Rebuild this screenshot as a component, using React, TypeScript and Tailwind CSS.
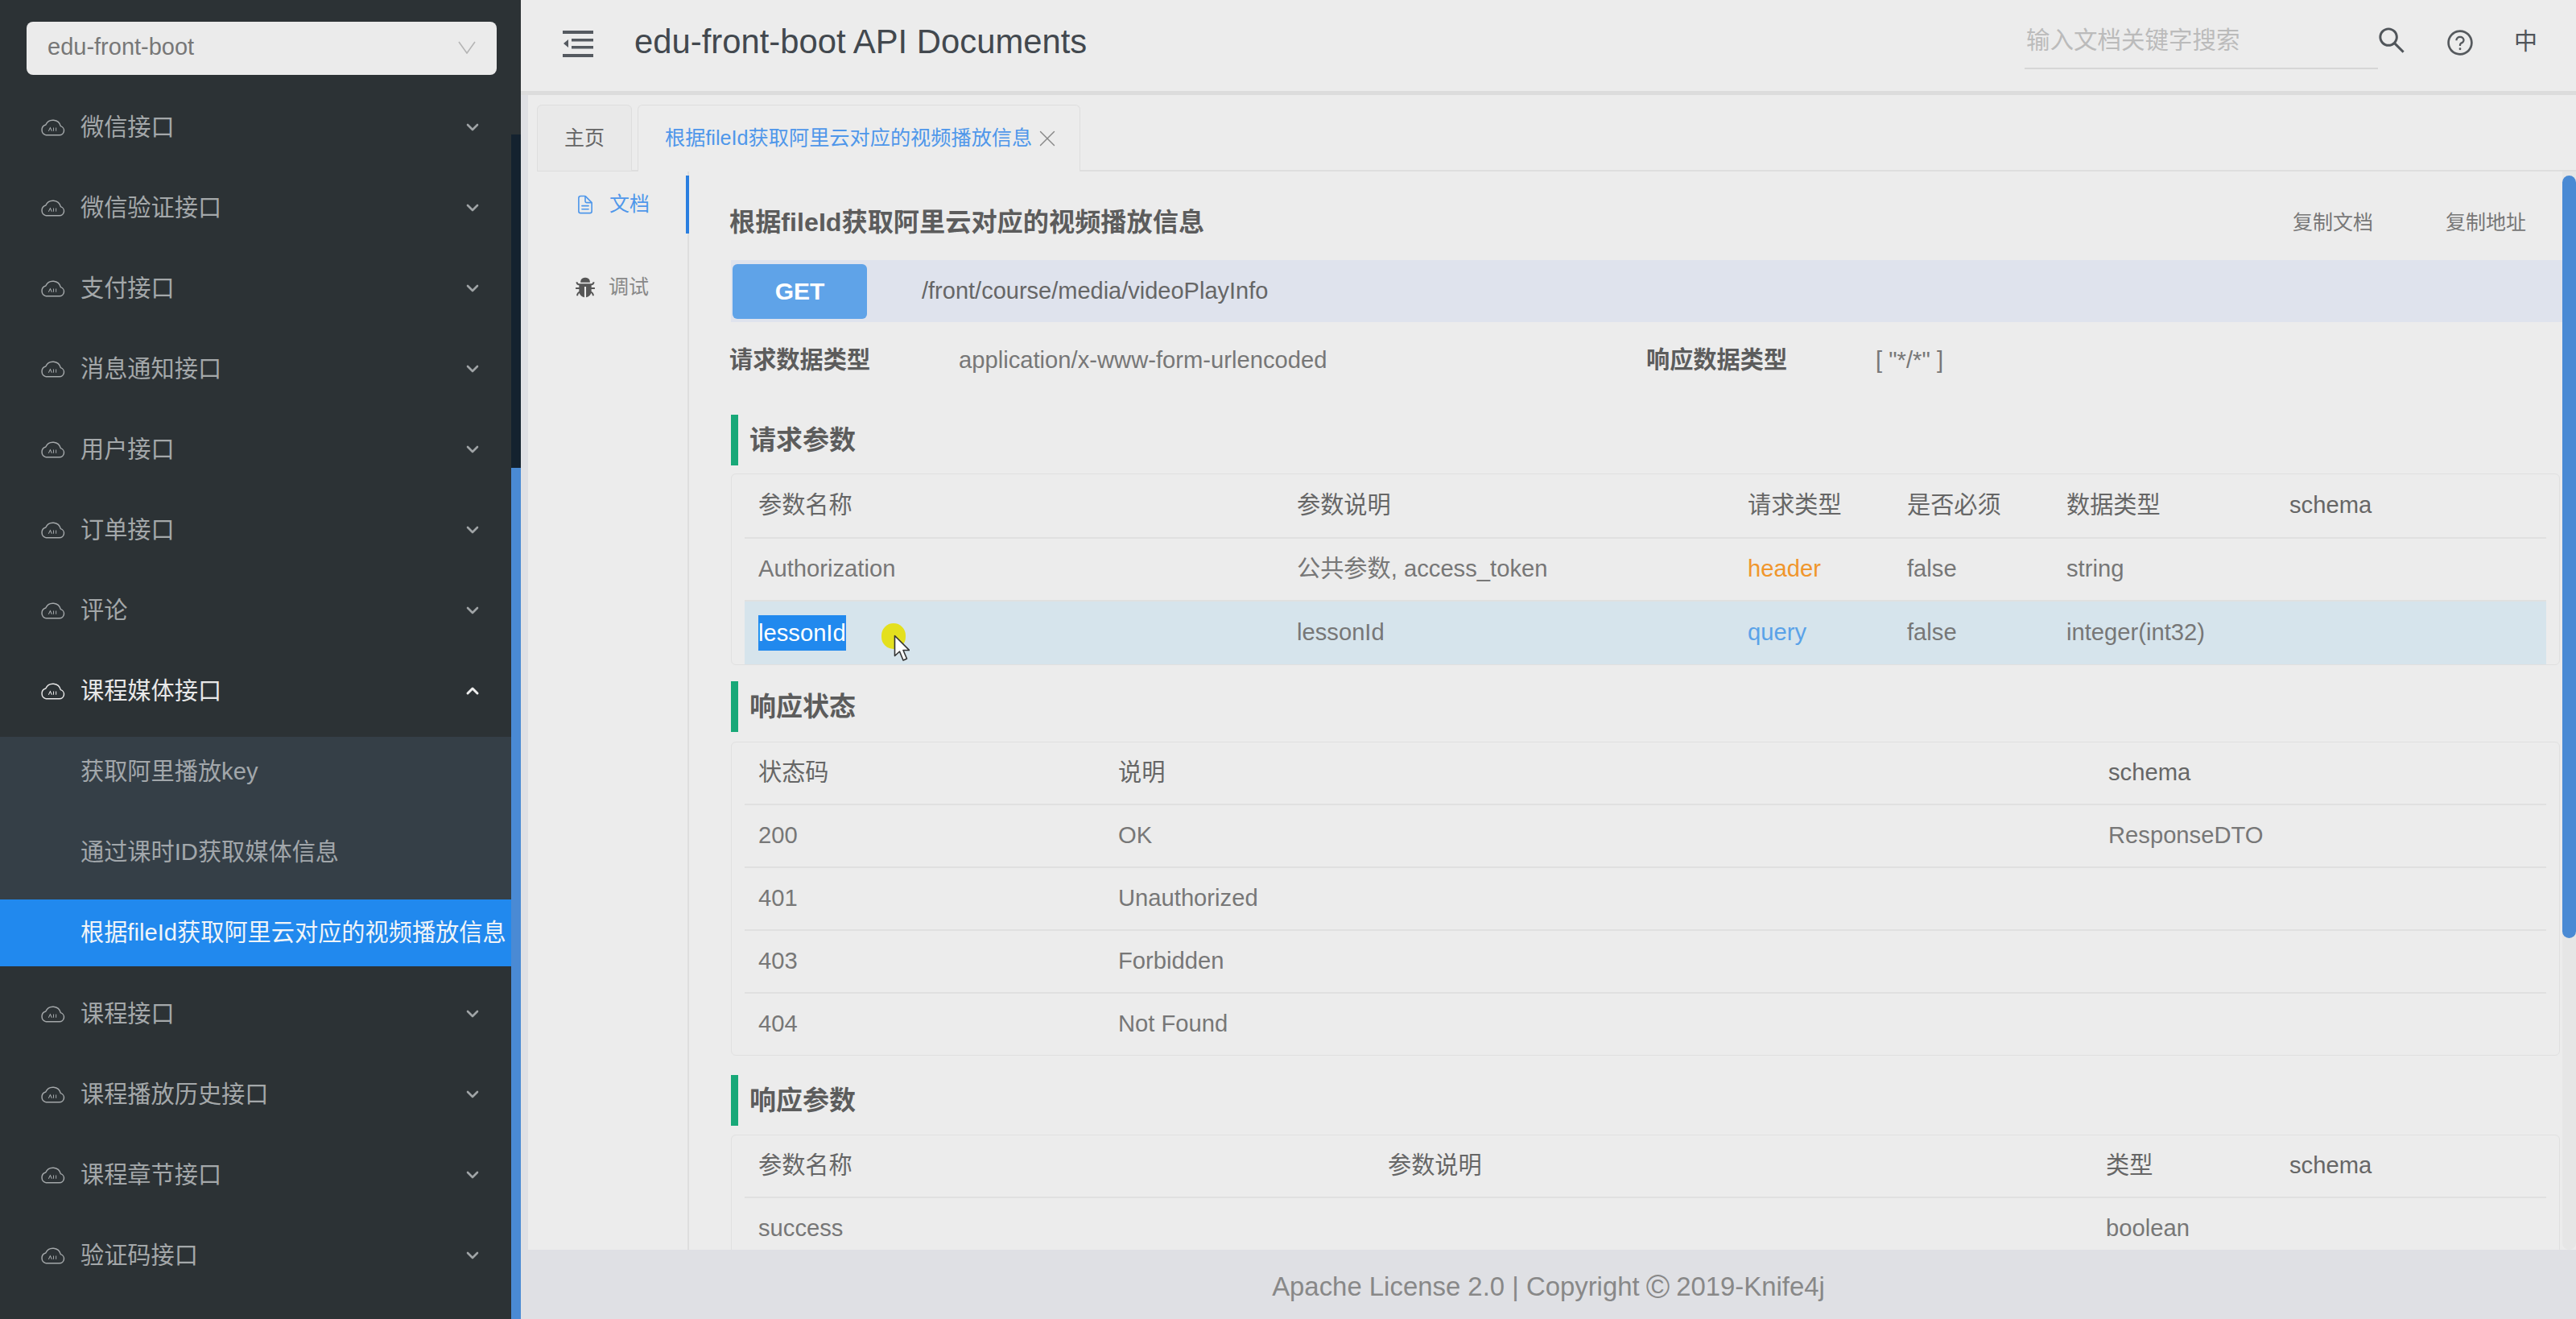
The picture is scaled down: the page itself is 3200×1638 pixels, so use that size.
import React from 'react';
import { ChevronDown, ChevronUp, X } from 'lucide-react';
import { AiFillBug, AiOutlineQuestionCircle, AiOutlineSearch } from 'react-icons/ai';
import { IoDocumentTextOutline } from 'react-icons/io5';

const CloudIcon = ({ className }: { className?: string }) => (
    <svg viewBox="0 0 30 24" fill="none" stroke="currentColor" strokeWidth="1.4" className={className}>
        <path d="M7 22h16a5.5 5.5 0 0 0 1.5-10.8A9.5 9.5 0 0 0 6.6 9.6 6.4 6.4 0 0 0 7 22z" strokeLinejoin="round" />
        <path d="M10 17l2-4 2 4M16 17v-4M19 17v-4" strokeWidth="1" />
    </svg>
);

const MenuFold = () => (
    <svg viewBox="0 0 38 34" className="w-[38px] h-[34px]" fill="#555a60">
        <rect x="0" y="1" width="38" height="4" />
        <rect x="11" y="11" width="27" height="3.5" />
        <rect x="11" y="20" width="27" height="3.5" />
        <rect x="0" y="30" width="38" height="4" />
        <path d="M7 12v10l-6-5z" />
    </svg>
);

const CursorArrow = () => (
    <svg viewBox="0 0 20 34" className="w-[20px] h-[34px]">
        <path d="M1.5 1.5v25l6-5.5 4.5 11 4.5-2-4.5-10.5h7.5z" fill="#fff" stroke="#333" strokeWidth="1.6" strokeLinejoin="round" />
    </svg>
);

const topGroups = ['微信接口', '微信验证接口', '支付接口', '消息通知接口', '用户接口', '订单接口', '评论'];
const bottomGroups = ['课程接口', '课程播放历史接口', '课程章节接口', '验证码接口'];

const NavGroup = ({ label, open }: { label: string; open?: boolean }) => (
    <div className={`h-[100px] shrink-0 flex items-center pl-[50px] pr-[36px] ${open ? 'text-[#e8e8e8]' : 'text-[#a4a8aa]'}`}>
        <CloudIcon className="w-[31px] h-[25px] mr-[19px] -mt-[3px]" />
        <span className="text-[29.2px] whitespace-nowrap">{label}</span>
        {open ? (
            <ChevronUp className="ml-auto w-[24px] h-[24px] -mt-[2px] text-[#eee]" strokeWidth={3} />
        ) : (
            <ChevronDown className="ml-auto w-[24px] h-[24px] -mt-[2px] text-[#a0a4a6]" strokeWidth={2.6} />
        )}
    </div>
);

const SubItem = ({ label, active }: { label: string; active?: boolean }) => (
    <div className={`h-[83px] flex items-center pl-[100px] text-[29.2px] whitespace-nowrap ${active ? 'bg-[#2189ee] text-[#f0f4f8]' : 'text-[#a2a7ab]'}`}>
        {label}
    </div>
);

const Sidebar = () => (
    <aside className="w-[647px] shrink-0 h-full flex bg-[#2c3235] overflow-hidden">
        <div className="w-[635px] shrink-0 flex flex-col">
            <div className="mx-[33px] mt-[27px] mb-[16px] h-[66px] shrink-0 w-[584px] rounded-lg bg-[#ebebeb] flex items-center pl-[26px] pr-[26px] pb-[3px] text-[#777] text-[29px]">
                <span>edu-front-boot</span>
                <svg viewBox="0 0 22 16" className="ml-auto w-[22px] h-[16px]" fill="none" stroke="#b5b5b5" strokeWidth="1.6">
                    <path d="M1 1l10 14L21 1" />
                </svg>
            </div>
            {topGroups.map(g => <NavGroup key={g} label={g} />)}
            <NavGroup label="课程媒体接口" open />
            <div className="mt-[6px] mb-[10px] pt-[2px] bg-[#353f47] flex flex-col gap-[17px] shrink-0">
                <SubItem label="获取阿里播放key" />
                <SubItem label="通过课时ID获取媒体信息" />
                <SubItem label="根据fileId获取阿里云对应的视频播放信息" active />
            </div>
            {bottomGroups.map(g => <NavGroup key={g} label={g} />)}
        </div>
        <div className="w-[12px] shrink-0 flex flex-col">
            <div className="h-[167px]" />
            <div className="h-[414px] bg-[#14222f]" />
            <div className="flex-1 bg-[#4a8ad4]" />
        </div>
    </aside>
);

const Header = () => (
    <header className="h-[118px] shrink-0 bg-[#ececec] border-b-[5px] border-[#dcdcdc] flex items-center pl-[52px] pb-[6px]">
        <MenuFold />
        <h1 className="ml-[51px] text-[41.8px] text-[#42484e] -mt-[3px]">edu-front-boot API Documents</h1>
        <div className="ml-auto w-[439px] h-[70px] border-b-2 border-[#d6d6d6] flex items-center text-[29.5px] text-[#bbb] -mt-[5px] pt-[1px] pl-[2px]">
            输入文档关键字搜索
        </div>
        <AiOutlineSearch className="-ml-[3px] w-[40px] h-[40px] text-[#50555a] -mt-[8px]" />
        <AiOutlineQuestionCircle className="ml-[47px] w-[36px] h-[36px] text-[#55595d] -mt-[2px]" />
        <span className="ml-[49px] mr-[48px] text-[29px] text-[#50555a] -mt-[2px]">中</span>
    </header>
);

const Tabs = () => (
    <div className="h-[95px] shrink-0 pt-[12px] pl-[11px] flex">
        <div className="flex w-full border-b-2 border-[#dedede] gap-[7px] h-[83px]">
            <div className="w-[118px] h-[83px] rounded-t-md border border-[#dedede] bg-[#e9e9e9] flex items-center justify-center text-[25px] text-[#666]">
                主页
            </div>
            <div className="w-[550px] h-[83px] rounded-t-md border border-b-0 border-[#dedede] bg-[#ececec] flex items-center pl-[33px] text-[25.2px] text-[#4f97ea]">
                <span className="whitespace-nowrap">根据fileId获取阿里云对应的视频播放信息</span>
                <X className="ml-[2px] w-[34px] h-[34px] text-[#888]" strokeWidth={1} />
            </div>
        </div>
    </div>
);

const SideTabs = () => (
    <div className="w-[200px] shrink-0 border-r-2 border-[#dedede] pt-[5px] flex flex-col gap-[31px] h-full">
        <div className="h-[72px] -mr-[2px] border-r-4 border-[#2a7fe0] flex items-center justify-end pr-[45px] text-[25px] text-[#4f97ea]">
            <IoDocumentTextOutline className="w-[26px] h-[28px] mr-[17px]" />
            文档
        </div>
        <div className="h-[72px] flex items-center justify-end pr-[48px] text-[25px] text-[#888]">
            <AiFillBug className="w-[28px] h-[28px] mr-[15px] text-[#555]" />
            调试
        </div>
    </div>
);

const SectionTitle = ({ title, className }: { title: string; className?: string }) => (
    <h3 className={`h-[63px] border-l-[9px] border-[#18a878] pl-[14px] flex items-center text-[33px] font-bold text-[#5c5c5c] ${className ?? ''}`}>
        {title}
    </h3>
);

const Row = ({ cols, cells, tall, short, highlight, last }: { cols: string; cells: React.ReactNode[]; tall?: boolean; short?: boolean; highlight?: boolean; last?: boolean }) => (
    <div className={`relative mx-[16px] pl-[17px] grid items-center ${cols} ${tall ? 'h-[80px]' : short ? 'h-[76px]' : 'h-[78px]'} ${highlight ? 'bg-[#d6e4ec]' : ''} ${last ? '' : 'border-b-2 border-[#e0e0e0]'}`}>
        {cells.map((c, i) => <div key={i} className="whitespace-nowrap">{c}</div>)}
    </div>
);

const paramCols = 'grid-cols-[669px_560px_198px_198px_277px_1fr]';
const statusCols = 'grid-cols-[447px_1230px_1fr]';
const respCols = 'grid-cols-[782px_892px_228px_1fr]';

const Content = () => (
    <div className="flex-1 min-w-0 pl-[52px] overflow-hidden">
        <div className="mt-[24px] h-[78px] flex items-center mb-[8px]">
            <h2 className="-ml-[2px] text-[32.2px] font-bold text-[#5c5c5c]">根据fileId获取阿里云对应的视频播放信息</h2>
            <div className="ml-auto pr-[45px] pt-[2px] flex gap-[90px] text-[25px] text-[#777]">
                <span>复制文档</span>
                <span>复制地址</span>
            </div>
        </div>

        <div className="h-[77px] bg-[#dfe3ed] flex items-center pl-[2px]">
            <div className="w-[167px] h-[68px] rounded-md bg-[#5fa3e8] flex items-center justify-center text-white font-bold text-[30px]">GET</div>
            <span className="ml-[68px] text-[29px] text-[#666]">/front/course/media/videoPlayInfo</span>
        </div>

        <div className="-ml-[2px] pt-[2px] h-[94px] grid grid-cols-[285px_854px_285px_1fr] items-center text-[29.2px] text-[#777]">
            <b className="text-[#5c5c5c]">请求数据类型</b>
            <span>application/x-www-form-urlencoded</span>
            <b className="text-[#5c5c5c]">响应数据类型</b>
            <span>[ "*/*" ]</span>
        </div>

        <SectionTitle title="请求参数" className="mt-[21px]" />
        <div className="mt-[10px] mr-[3px] rounded-md border border-[#e0e0e0] text-[29.2px] text-[#777]">
            <Row tall cols={paramCols} cells={[
                <span className="text-[#666]">参数名称</span>, <span className="text-[#666]">参数说明</span>, <span className="text-[#666]">请求类型</span>,
                <span className="text-[#666]">是否必须</span>, <span className="text-[#666]">数据类型</span>, <span className="text-[#666]">schema</span>
            ]} />
            <Row cols={paramCols} cells={[
                'Authorization', '公共参数, access_token', <span className="text-[#f0962c]">header</span>, 'false', 'string', ''
            ]} />
            <div className="relative">
                <Row highlight last cols={paramCols} cells={[
                    <span className="inline-block h-[44px] leading-[44px] bg-[#2189ee] text-white">lessonId</span>,
                    'lessonId', <span className="text-[#5aa2e8]">query</span>, 'false', 'integer(int32)', ''
                ]} />
                {/* mouse pointer of the screen recording */}
                <div className="absolute left-[186px] top-[27px] w-[30px] h-[32px] rounded-full bg-[#e4e01e]" />
                <div className="absolute left-[201px] top-[41px]"><CursorArrow /></div>
            </div>
        </div>

        <SectionTitle title="响应状态" className="mt-[20px]" />
        <div className="mt-[12px] mr-[3px] rounded-md border border-[#e0e0e0] text-[29.2px] text-[#777]">
            <Row cols={statusCols} cells={[
                <span className="text-[#666]">状态码</span>, <span className="text-[#666]">说明</span>, <span className="text-[#666]">schema</span>
            ]} />
            <Row cols={statusCols} cells={['200', 'OK', 'ResponseDTO']} />
            <Row cols={statusCols} cells={['401', 'Unauthorized', '']} />
            <Row cols={statusCols} cells={['403', 'Forbidden', '']} />
            <Row last short cols={statusCols} cells={['404', 'Not Found', '']} />
        </div>

        <SectionTitle title="响应参数" className="mt-[24px]" />
        <div className="mt-[11px] mr-[3px] rounded-md border border-[#e0e0e0] text-[29.2px] text-[#777]">
            <Row cols={respCols} cells={[
                <span className="text-[#666]">参数名称</span>, <span className="text-[#666]">参数说明</span>, <span className="text-[#666]">类型</span>, <span className="text-[#666]">schema</span>
            ]} />
            <Row cols={respCols} cells={['success', '', 'boolean', '']} />
        </div>
    </div>
);

const Scrollbar = () => (
    <div className="w-[17px] shrink-0 h-full pt-[5px] bg-[#e6e6e6] rounded-b-full">
        <div className="h-[947px] rounded-full bg-[#4a8ad4]" />
    </div>
);

export default function App() {
    return (
        <div className="w-[3200px] h-[1638px] flex overflow-hidden bg-[#dfe0e4] font-['Liberation_Sans','Noto_Sans_CJK_SC',sans-serif]">
            <Sidebar />
            <main className="flex-1 min-w-0 flex flex-col">
                <Header />
                <div className="h-[1434px] shrink-0 pl-[9px]">
                    <div className="h-full bg-[#ececec] flex flex-col overflow-hidden">
                        <Tabs />
                        <div className="flex-1 min-h-0 flex">
                            <SideTabs />
                            <Content />
                            <Scrollbar />
                        </div>
                    </div>
                </div>
                <footer className="flex-1 flex items-center justify-center pt-[5px] text-[32.9px] text-[#888]">
                    Apache License 2.0 | Copyright
                    <span className="mx-[8px] text-[40px] leading-none">©</span>
                    2019-Knife4j
                </footer>
            </main>
        </div>
    );
}
